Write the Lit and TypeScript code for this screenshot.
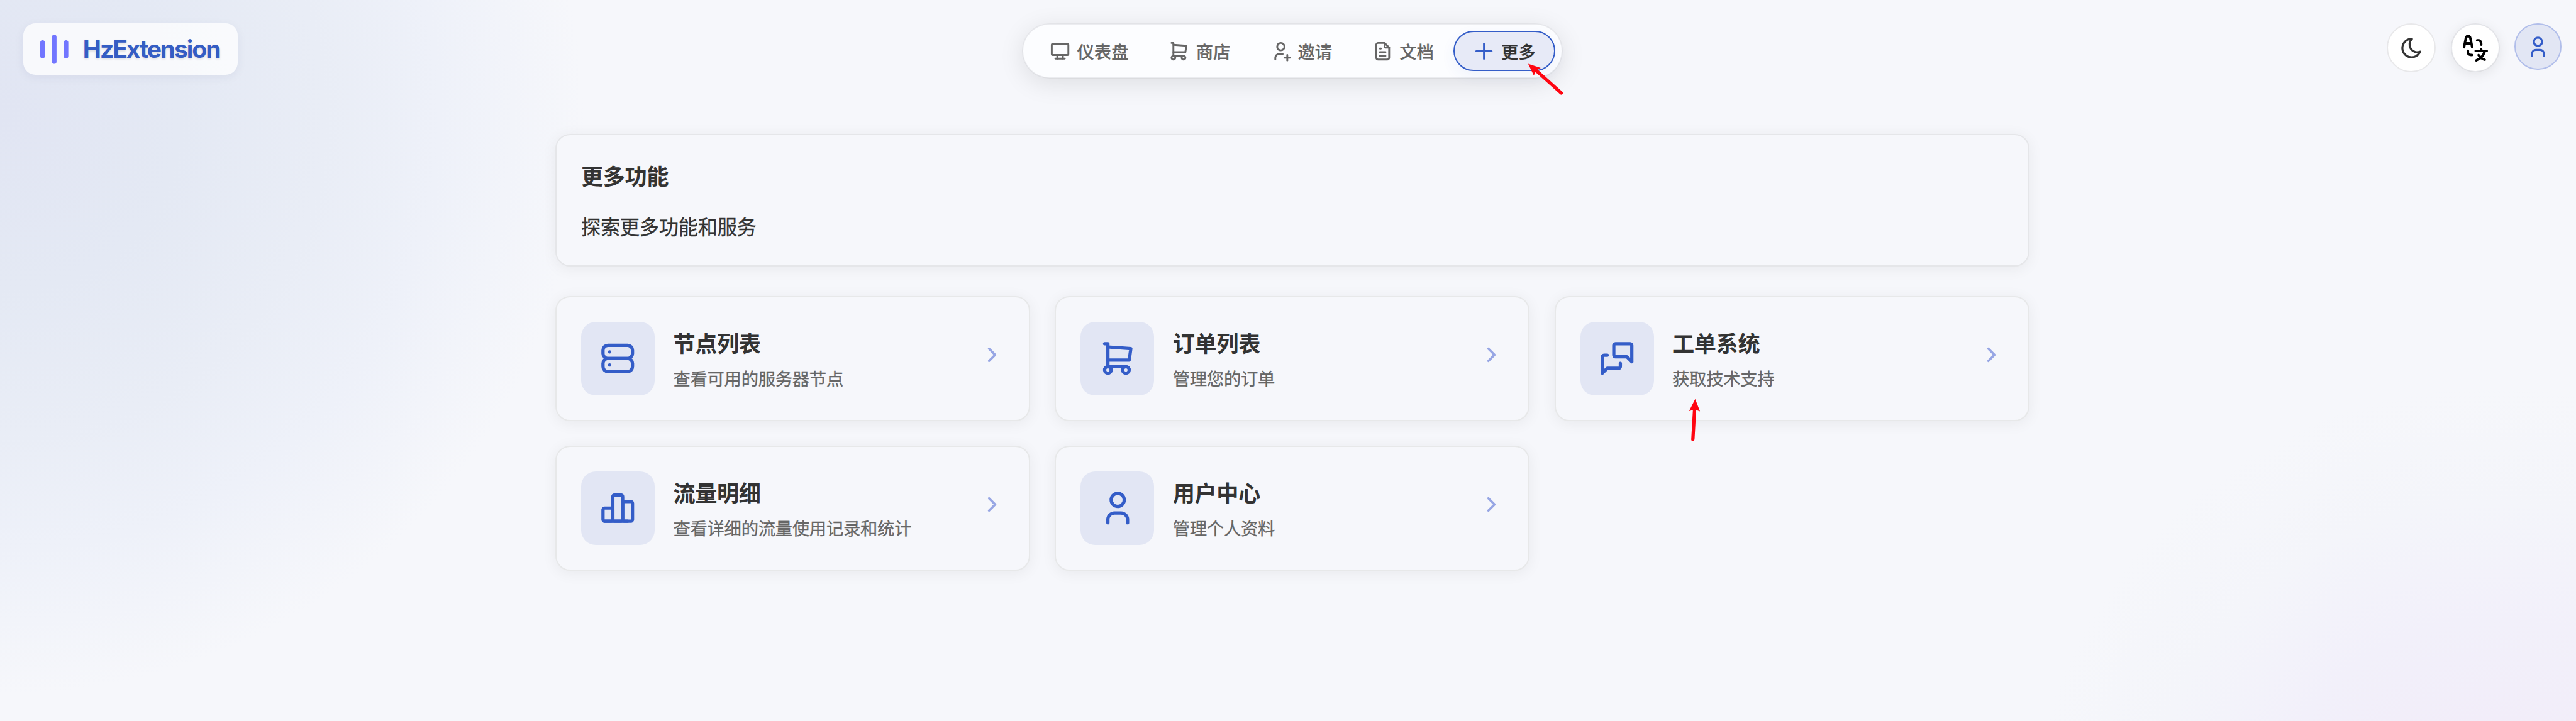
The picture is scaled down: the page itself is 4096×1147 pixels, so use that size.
import { LitElement, html, css, svg } from "lit";
import { customElement } from "lit/decorators.js";

const ICONS: Record<string, string[]> = {
  desktop: [
    "M3 5a1 1 0 0 1 1 -1h16a1 1 0 0 1 1 1v10a1 1 0 0 1 -1 1h-16a1 1 0 0 1 -1 -1z",
    "M7 20h10",
    "M9 16v4",
    "M15 16v4",
  ],
  cart: [
    "M4 19a2 2 0 1 0 4 0a2 2 0 1 0 -4 0",
    "M15 19a2 2 0 1 0 4 0a2 2 0 1 0 -4 0",
    "M17 17h-11v-14h-2",
    "M6 5l14 1l-1 7h-13",
  ],
  userPlus: [
    "M8 7a4 4 0 1 0 8 0a4 4 0 0 0 -8 0",
    "M16 19h6",
    "M19 16v6",
    "M6 21v-2a4 4 0 0 1 4 -4h4",
  ],
  file: [
    "M14 3v4a1 1 0 0 0 1 1h4",
    "M17 21h-10a2 2 0 0 1 -2 -2v-14a2 2 0 0 1 2 -2h7l5 5v11a2 2 0 0 1 -2 2z",
    "M9 9h1",
    "M9 13h6",
    "M9 17h6",
  ],
  plus: ["M12 3.7v16.6", "M3.7 12h16.6"],
  moon: [
    "M12 3c.132 0 .263 0 .393 0a7.5 7.5 0 0 0 7.92 12.446a9 9 0 1 1 -8.313 -12.454z",
  ],
  user: [
    "M8 7a4 4 0 1 0 8 0a4 4 0 0 0 -8 0",
    "M6 21v-2a4 4 0 0 1 4 -4h4a4 4 0 0 1 4 4v2",
  ],
  server: [
    "M3 7a3 3 0 0 1 3 -3h12a3 3 0 0 1 3 3v2a3 3 0 0 1 -3 3h-12a3 3 0 0 1 -3 -3z",
    "M3 15a3 3 0 0 1 3 -3h12a3 3 0 0 1 3 3v2a3 3 0 0 1 -3 3h-12a3 3 0 0 1 -3 -3z",
    "M7 8v.01",
    "M7 16v.01",
  ],
  messages: [
    "M21 14l-3 -3h-7a1 1 0 0 1 -1 -1v-6a1 1 0 0 1 1 -1h9a1 1 0 0 1 1 1v10",
    "M14 15v2a1 1 0 0 1 -1 1h-7l-3 3v-10a1 1 0 0 1 1 -1h2",
  ],
  chart: [
    "M3 13a1 1 0 0 1 1 -1h4a1 1 0 0 1 1 1v6a1 1 0 0 1 -1 1h-4a1 1 0 0 1 -1 -1z",
    "M9 5a1 1 0 0 1 1 -1h4a1 1 0 0 1 1 1v14a1 1 0 0 1 -1 1h-4a1 1 0 0 1 -1 -1z",
    "M15 9a1 1 0 0 1 1 -1h4a1 1 0 0 1 1 1v10a1 1 0 0 1 -1 1h-4a1 1 0 0 1 -1 -1z",
    "M4 20h14",
  ],
  chevron: ["M9 6l6 6l-6 6"],
};

const icon = (name: string, cls: string) => html`
  <svg class="icon ${cls}" viewBox="0 0 24 24" aria-hidden="true">
    ${ICONS[name].map((d) => svg`<path d=${d}></path>`)}
  </svg>
`;

const NAV = [
  { icon: "desktop", label: "仪表盘", active: false },
  { icon: "cart", label: "商店", active: false },
  { icon: "userPlus", label: "邀请", active: false },
  { icon: "file", label: "文档", active: false },
  { icon: "plus", label: "更多", active: true },
];

const CARDS = [
  { icon: "server", title: "节点列表", text: "查看可用的服务器节点" },
  { icon: "cart", title: "订单列表", text: "管理您的订单" },
  { icon: "messages", title: "工单系统", text: "获取技术支持" },
  { icon: "chart", title: "流量明细", text: "查看详细的流量使用记录和统计" },
  { icon: "user", title: "用户中心", text: "管理个人资料" },
];

@customElement("app-root")
export class AppRoot extends LitElement {
  static styles = css`
    :host {
      display: block;
      width: 100%;
      height: 1147px;
      overflow: hidden;
      background: #f6f7fb;
    }
    .page {
      zoom: 0.97663;
      position: relative;
      box-sizing: border-box;
      width: 4208px;
      height: 1175px;
      padding: 38px;
      color: #333;
      font-family: "Noto Sans CJK SC", sans-serif;
      background:
        radial-gradient(circle 940px at 10px 190px,
          #e1e5f3 0, #e4e9f4 30%, #e9edf6 55%, #eef1f9 75%, rgba(246, 247, 251, 0) 100%),
        radial-gradient(circle 760px at 4060px 1390px,
          #f3ebf8 0, #f2edf9 28%, #f2f0fa 50%, #f4f5fa 75%, rgba(246, 247, 251, 0) 100%),
        #f6f7fb;
    }
    .icon {
      display: block;
      flex: none;
      fill: none;
      stroke: currentColor;
      stroke-width: 2;
      stroke-linecap: round;
      stroke-linejoin: round;
    }
    .s36 { width: 36px; height: 36px; }
    .s40 { width: 40px; height: 40px; }
    .s64 { width: 64px; height: 64px; }

    .top {
      display: grid;
      grid-template-columns: 1fr auto 1fr;
      align-items: start;
      height: 90px;
    }
    .logo {
      display: flex;
      align-items: center;
      justify-self: start;
      box-sizing: border-box;
      width: 349px;
      height: 84px;
      padding: 0 28px;
      gap: 21px;
      border-radius: 20px;
      background: rgba(255, 255, 255, 0.74);
      box-shadow: 0 4px 16px rgba(30, 40, 90, 0.06);
    }
    .mark { display: block; flex: none; width: 48px; height: 48px; }
    .brand {
      color: #345dc4;
      font: 700 40px/48px Inter, sans-serif;
      letter-spacing: -2.15px;
      white-space: nowrap;
      text-shadow: 0 2px 4px rgba(0, 0, 0, 0.12);
    }
    .nav {
      display: flex;
      box-sizing: border-box;
      height: 90px;
      padding: 10px;
      border: 2.1px solid rgba(0, 0, 0, 0.045);
      border-radius: 45px;
      background: #fcfdff;
      background-clip: padding-box;
      box-shadow: 0 8px 40px rgba(0, 0, 0, 0.1);
    }
    .item {
      display: flex;
      align-items: center;
      box-sizing: border-box;
      height: 66px;
      padding: 0 30px;
      gap: 9.6px;
      border: 2.1px solid transparent;
      border-radius: 33px;
      color: #666;
      font-size: 28px;
      font-weight: 500;
      line-height: 40px;
      -webkit-text-stroke: 0.25px currentColor;
      white-space: nowrap;
    }
    .item.active {
      border-color: #345dc8;
      background: #e7eaf7;
      color: #333;
      box-shadow: 0 8px 24px rgba(52, 93, 200, 0.06);
    }
    .item.active .icon { color: #345dc8; }

    .actions {
      display: flex;
      align-items: flex-start;
      justify-self: end;
      gap: 24px;
    }
    .round {
      display: flex;
      align-items: center;
      justify-content: center;
      box-sizing: border-box;
      width: 80px;
      height: 80px;
      border: 2.1px solid #e8e8ea;
      border-radius: 50%;
      background: #fff;
    }
    .raised {
      border-color: rgba(0, 0, 0, 0.06);
      background-clip: padding-box;
      box-shadow: 0 4px 20px rgba(0, 0, 0, 0.08);
    }
    .avatar {
      width: 76px;
      height: 76px;
      border-color: #b1beea;
      background: #e2e6f4;
      color: #345dc8;
    }
    .translate { display: block; width: 44px; height: 46px; margin-left: 2px; }

    .main {
      display: flex;
      flex-direction: column;
      width: 2400px;
      margin: 90px auto 0;
      gap: 48px;
    }
    .panel, .card {
      box-sizing: border-box;
      padding: 40px;
      border: 2.1px solid #e5e6e9;
      border-radius: 24px;
      background: #f6f7fb;
      box-shadow: 0 4px 24px rgba(0, 0, 0, 0.06);
    }
    .panel {
      display: flex;
      flex-direction: column;
      justify-content: space-between;
      height: 216px;
    }
    .heading {
      margin: 0;
      padding-top: 1px;
      font-size: 36px;
      font-weight: 700;
      line-height: 50px;
      letter-spacing: -0.35px;
    }
    .lead {
      margin: 0;
      font-size: 32px;
      line-height: 46px;
      letter-spacing: -0.3px;
      -webkit-text-stroke: 0.3px currentColor;
    }
    .grid {
      display: grid;
      grid-template-columns: repeat(3, 1fr);
      gap: 40px;
    }
    .card {
      display: flex;
      align-items: center;
      height: 204px;
      border-color: #e7e8e9;
    }
    .tile {
      display: flex;
      flex: none;
      align-items: center;
      justify-content: center;
      width: 120px;
      height: 120px;
      border-radius: 24px;
      background: #e2e6f4;
      color: #345dc8;
    }
    .copy { flex: 1; margin-left: 30px; padding-top: 2px; }
    .title {
      margin: 0 0 12px;
      font-size: 36px;
      font-weight: 700;
      line-height: 50px;
      letter-spacing: -0.35px;
    }
    .desc {
      margin: 0;
      color: #666;
      font-size: 28px;
      line-height: 42px;
      letter-spacing: -0.28px;
      -webkit-text-stroke: 0.3px currentColor;
    }
    .go { margin-bottom: 12px; color: #97a6e4; stroke-width: 2.3; }

    .marks {
      position: absolute;
      left: 0;
      top: 0;
      width: 4194px;
      height: 1174px;
      pointer-events: none;
    }
  `;

  render() {
    return html`
      <div class="page">
        <header class="top">
          <div class="logo">
            <svg class="mark" viewBox="0 0 48 48" fill="none" stroke="#7276ff" stroke-width="7.4" stroke-linecap="round">
              <path d="M3.7 13v22M22.8 4v40M42 13v22"></path>
            </svg>
            <span class="brand">HzExtension</span>
          </div>
          <nav class="nav">
            ${NAV.map(
              (n) => html`<div class="item ${n.active ? "active" : ""}">
                ${icon(n.icon, "s36")}<span>${n.label}</span>
              </div>`
            )}
          </nav>
          <div class="actions">
            <div class="round">${icon("moon", "s40")}</div>
            <div class="round raised">
              <svg class="translate" viewBox="0 0 132 138" fill="none" stroke="#000" stroke-width="12" stroke-linecap="round" stroke-linejoin="round">
                <path d="M9 65L18 21Q21 10 29 10T40 21L49 65M17 46H42"></path>
                <path d="M73 31H82Q93 33 93 52"></path>
                <path d="M28 82V92Q31 103 48 103"></path>
                <path d="M93 75V82M66 83H120M109 88Q100 118 69 129M80 103Q92 120 110 126"></path>
              </svg>
            </div>
            <div class="round avatar">${icon("user", "s40")}</div>
          </div>
        </header>
        <main class="main">
          <section class="panel">
            <h1 class="heading">更多功能</h1>
            <p class="lead">探索更多功能和服务</p>
          </section>
          <section class="grid">
            ${CARDS.map(
              (c) => html`<article class="card">
                <div class="tile">${icon(c.icon, "s64")}</div>
                <div class="copy">
                  <h2 class="title">${c.title}</h2>
                  <p class="desc">${c.text}</p>
                </div>
                ${icon("chevron", "s40 go")}
              </article>`
            )}
          </section>
        </main>
        <svg class="marks" viewBox="0 0 4194 1174" fill="#ff0511" stroke="#ff0511" stroke-linecap="round">
          <path d="M2500 114L2542 151.500" stroke-width="5.400"></path>
          <path d="M2488 104L2508.500 110.700L2501.500 114.500L2497.200 122.800Z" stroke="none"></path>
          <path d="M2759 667L2756.200 715.500" stroke-width="5.400"></path>
          <path d="M2760 650L2767.800 670.200L2759.300 667L2750 669.600Z" stroke="none"></path>
        </svg>
      </div>
    `;
  }
}
